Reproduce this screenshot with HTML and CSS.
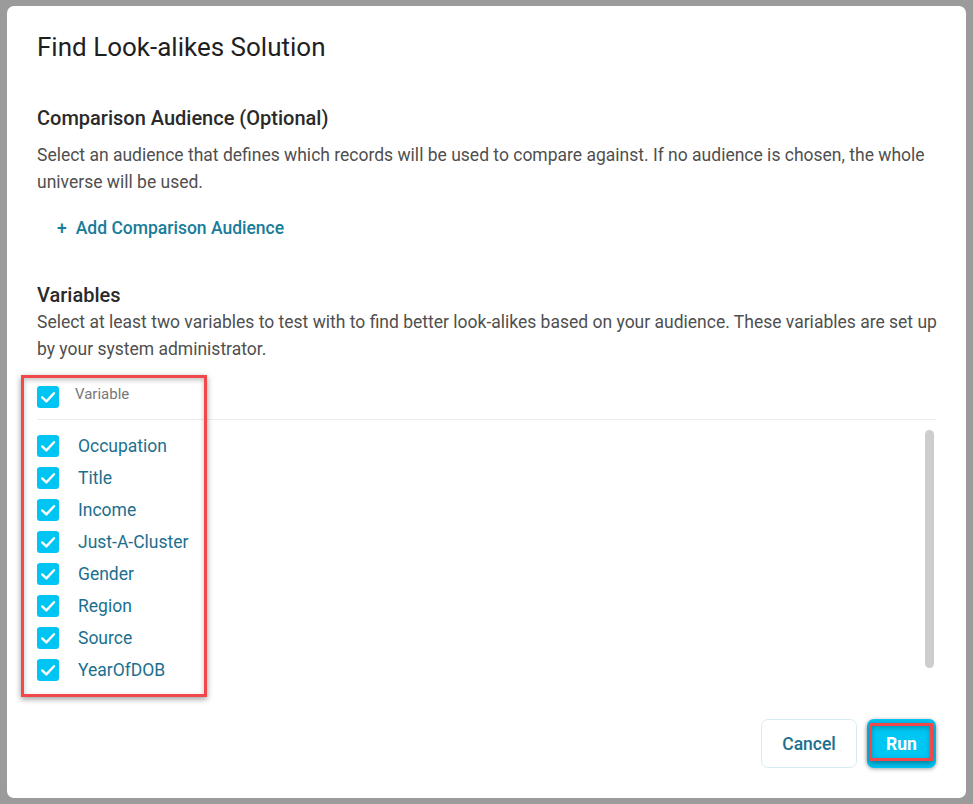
FILE: index.html
```html
<!DOCTYPE html>
<html lang="en">
<head>
<meta charset="utf-8">
<title>Find Look-alikes Solution</title>
<link rel="stylesheet" href="styles.css">
</head>
<body>
<div class="dialog">
  <h1 class="title">Find Look-alikes Solution</h1>

  <h2 class="section-title first">Comparison Audience (Optional)</h2>
  <p class="desc">Select an audience that defines which records will be used to compare against. If no audience is chosen, the whole universe will be used.</p>
  <a class="add-link" href="#"><span class="plus">+</span>Add Comparison Audience</a>

  <h2 class="section-title second">Variables</h2>
  <p class="desc tight">Select at least two variables to test with to find better look-alikes based on your audience. These variables are set up by your system administrator.</p>

  <div class="var-header">
    <span class="cb"><svg viewBox="0 0 22 22" width="22" height="22"><path d="M5.2 11.4 L9.4 15.4 L17 7.2" fill="none" stroke="#fff" stroke-width="2.4" stroke-linecap="round" stroke-linejoin="round"/></svg></span>
    <span class="var-header-label">Variable</span>
  </div>

  <div class="var-list-wrap">
    <ul class="var-list">
      <li><span class="cb"><svg viewBox="0 0 22 22" width="22" height="22"><path d="M5.2 11.4 L9.4 15.4 L17 7.2" fill="none" stroke="#fff" stroke-width="2.4" stroke-linecap="round" stroke-linejoin="round"/></svg></span><span class="var-name">Occupation</span></li>
      <li><span class="cb"><svg viewBox="0 0 22 22" width="22" height="22"><path d="M5.2 11.4 L9.4 15.4 L17 7.2" fill="none" stroke="#fff" stroke-width="2.4" stroke-linecap="round" stroke-linejoin="round"/></svg></span><span class="var-name">Title</span></li>
      <li><span class="cb"><svg viewBox="0 0 22 22" width="22" height="22"><path d="M5.2 11.4 L9.4 15.4 L17 7.2" fill="none" stroke="#fff" stroke-width="2.4" stroke-linecap="round" stroke-linejoin="round"/></svg></span><span class="var-name">Income</span></li>
      <li><span class="cb"><svg viewBox="0 0 22 22" width="22" height="22"><path d="M5.2 11.4 L9.4 15.4 L17 7.2" fill="none" stroke="#fff" stroke-width="2.4" stroke-linecap="round" stroke-linejoin="round"/></svg></span><span class="var-name">Just-A-Cluster</span></li>
      <li><span class="cb"><svg viewBox="0 0 22 22" width="22" height="22"><path d="M5.2 11.4 L9.4 15.4 L17 7.2" fill="none" stroke="#fff" stroke-width="2.4" stroke-linecap="round" stroke-linejoin="round"/></svg></span><span class="var-name">Gender</span></li>
      <li><span class="cb"><svg viewBox="0 0 22 22" width="22" height="22"><path d="M5.2 11.4 L9.4 15.4 L17 7.2" fill="none" stroke="#fff" stroke-width="2.4" stroke-linecap="round" stroke-linejoin="round"/></svg></span><span class="var-name">Region</span></li>
      <li><span class="cb"><svg viewBox="0 0 22 22" width="22" height="22"><path d="M5.2 11.4 L9.4 15.4 L17 7.2" fill="none" stroke="#fff" stroke-width="2.4" stroke-linecap="round" stroke-linejoin="round"/></svg></span><span class="var-name">Source</span></li>
      <li><span class="cb"><svg viewBox="0 0 22 22" width="22" height="22"><path d="M5.2 11.4 L9.4 15.4 L17 7.2" fill="none" stroke="#fff" stroke-width="2.4" stroke-linecap="round" stroke-linejoin="round"/></svg></span><span class="var-name">YearOfDOB</span></li>
    </ul>
    <div class="scroll-thumb"></div>
  </div>

  <div class="footer">
    <button class="btn btn-cancel" type="button">Cancel</button>
    <button class="btn btn-run" type="button">Run<span class="highlight run-highlight"></span></button>
  </div>

  <div class="highlight var-highlight"></div>
</div>
</body>
</html>
```

FILE: styles.css
```css
html, body {
  margin: 0;
  padding: 0;
}

body {
  width: 973px;
  height: 804px;
  background: #9b9b9b;
  font-family: Roboto, "Liberation Sans", Arial, sans-serif;
  overflow: hidden;
  padding: 6px 7px 6px 7px;
  box-sizing: border-box;
}

.dialog {
  position: relative;
  width: 959px;
  height: 792px;
  box-sizing: border-box;
  background: #fff;
  border-radius: 7px;
  padding: 26px 30px 30px 30px;
  display: flex;
  flex-direction: column;
}

.title {
  margin: 0;
  font-size: 26px;
  line-height: 30px;
  font-weight: 400;
  color: #1f1f1f;
}

.section-title {
  margin: 0;
  font-size: 20px;
  line-height: 24px;
  font-weight: 500;
  color: #2a2a2a;
}

.section-title.first {
  margin-top: 44px;
}

.section-title.second {
  margin-top: 43px;
}

.desc {
  margin: 12px -4px 0 0;
  font-size: 17.5px;
  line-height: 27px;
  color: #4f4f4f;
}

.desc.tight {
  margin-top: 2px;
}

.add-link {
  display: inline-flex;
  align-self: flex-start;
  margin: 20px 0 0 20px;
  font-size: 17.5px;
  line-height: 24px;
  font-weight: 500;
  color: #187c9a;
  text-decoration: none;
}

.plus {
  margin-right: 9px;
}

.cb {
  display: inline-flex;
  width: 22px;
  height: 22px;
  flex: none;
  border-radius: 3px;
  background: #00c4f2;
}

.cb svg {
  display: block;
}

.var-header {
  display: flex;
  align-items: flex-start;
  margin-top: 23px;
  padding-bottom: 11px;
  border-bottom: 1px solid #ececec;
}

.var-header-label {
  margin-left: 16px;
  font-size: 15px;
  line-height: 16px;
  color: #787878;
}

.var-list-wrap {
  display: flex;
  margin-top: 10px;
}

.var-list {
  list-style: none;
  margin: 0;
  padding: 0;
  flex: 1;
}

.var-list li {
  display: flex;
  align-items: center;
  height: 32px;
}

.var-name {
  margin-left: 19px;
  font-size: 17.5px;
  color: #1c6f8e;
}

.scroll-thumb {
  width: 9px;
  height: 238px;
  margin-right: 2px;
  border-radius: 5px;
  background: #cdcdcd;
  flex: none;
}

.footer {
  margin-top: auto;
  display: flex;
  justify-content: flex-end;
  gap: 10px;
}

.btn {
  position: relative;
  height: 49px;
  border-radius: 7px;
  font-family: Roboto, "Liberation Sans", Arial, sans-serif;
  font-size: 17.5px;
  font-weight: 500;
  cursor: pointer;
}

.btn-cancel {
  width: 96px;
  background: #fff;
  border: 1px solid #d6ecf2;
  color: #1c6f8e;
}

.btn-run {
  width: 69px;
  background: #00c6f4;
  border: none;
  color: #fff;
  font-weight: 700;
  box-shadow: 0 1px 4px rgba(0, 0, 0, 0.35);
}

.highlight {
  position: absolute;
  box-sizing: border-box;
  border: 3px solid #f2484b;
  box-shadow: 0 2px 6px rgba(0, 0, 0, 0.4), inset 0 2px 5px rgba(0, 0, 0, 0.25);
  pointer-events: none;
}

.var-highlight {
  left: 14px;
  top: 369px;
  width: 186px;
  height: 322px;
}

.run-highlight {
  left: 2px;
  top: 4px;
  width: 64px;
  height: 38px;
}
```
